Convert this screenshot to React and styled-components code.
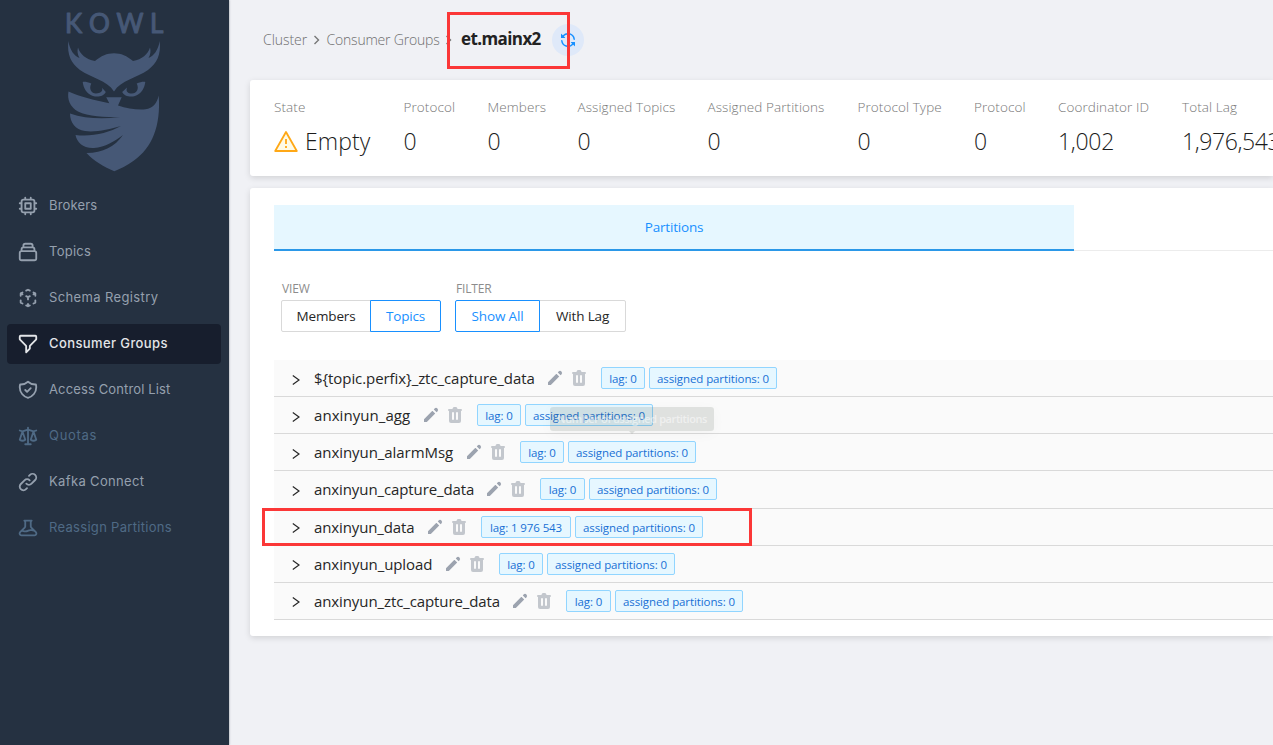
import React from "react";
import styled, { createGlobalStyle, css } from "styled-components";
import {
  HiOutlineChip,
  HiOutlineCollection,
  HiOutlineCubeTransparent,
  HiOutlineFilter,
  HiOutlineShieldCheck,
  HiOutlineScale,
  HiOutlineLink,
  HiOutlineBeaker,
  HiPencil,
  HiTrash,
} from "react-icons/hi";

const GlobalStyle = createGlobalStyle`
  *, *::before, *::after { box-sizing: border-box; }
  body {
    margin: 0;
    overflow: hidden;
    background: #f0f1f5;
    font-family: "Open Sans", "Noto Sans", sans-serif;
    font-size: 14px;
    color: #262626;
  }
`;

const Page = styled.div`
  position: relative;
  display: flex;
  width: 100%;
  height: 745px;
  overflow: hidden;
`;

const Sidebar = styled.aside`
  flex: none;
  display: flex;
  flex-direction: column;
  width: 229px;
  background: #253141;
  box-shadow: 0 0 2px rgba(37, 49, 65, 0.5);
`;

const Brand = styled.div`
  height: 180px;
`;

const Menu = styled.nav`
  display: flex;
  flex-direction: column;
  gap: 6px;
  padding: 6px 8px 0 7px;
`;

const menuTones = {
  normal: css`color: #95a0ae;`,
  active: css`color: #e3e5e8; background: #171e2d; font-weight: 500;`,
  disabled: css`color: #4f6a85;`,
};

const MenuItem = styled.a`
  display: flex;
  align-items: center;
  gap: 10px;
  height: 40px;
  padding-left: 10px;
  border-radius: 4px;
  font-family: Inter, sans-serif;
  font-size: 13px;
  white-space: nowrap;
  ${(p) => menuTones[p.$tone]}
  svg { flex: none; width: 22px; height: 22px; }
`;

const MenuLabel = styled.span`
  padding-bottom: 2px;
  letter-spacing: ${(p) => p.$tracking}px;
`;

const Main = styled.main`
  flex: 1;
  min-width: 0;
  display: flex;
  flex-direction: column;
  padding-left: 21px;
`;

const Breadcrumbs = styled.header`
  display: flex;
  align-items: center;
  height: 80px;
  padding-left: 13px;
  color: #6e6e6e;
  white-space: nowrap;
`;

const Crumb = styled.a`
  width: ${(p) => p.$width}px;
  padding-bottom: 2px;
  font-size: 14px;
  font-weight: 300;
  letter-spacing: ${(p) => p.$tracking}px;
`;

const Separator = styled.svg`
  width: 7px;
  height: 10px;
  margin: 0 6.5px 0 7px;
`;

const Title = styled.h1`
  width: 91px;
  margin: 0 0 4px 3px;
  font-size: 17px;
  font-weight: 700;
  letter-spacing: -0.6px;
  color: #222;
`;

const RefreshButton = styled.button`
  display: grid;
  place-items: center;
  width: 32px;
  height: 32px;
  padding: 0;
  border: 0;
  border-radius: 50%;
  background: #dfe9f9;
  color: #1890ff;
`;

const Card = styled.section`
  flex: none;
  background: #fff;
  border-radius: 3px 0 0 3px;
  box-shadow: 0 2px 6px rgba(0, 0, 0, 0.13);
`;

const StatsCard = styled(Card)`
  display: flex;
  height: 96px;
  margin-bottom: 12px;
  padding: 17px 0 0 24px;
  overflow: hidden;
`;

const Stat = styled.div`
  flex: none;
  width: ${(p) => p.$width}px;
  white-space: nowrap;
`;

const StatLabel = styled.div`
  height: 20px;
  line-height: 20px;
  font-size: 13.5px;
  font-weight: 300;
  letter-spacing: 0.09px;
  color: #777;
`;

const StatValue = styled.div`
  display: flex;
  align-items: center;
  gap: 7px;
  height: 38px;
  margin-top: 6px;
  font-size: 23px;
  font-weight: 350;
  letter-spacing: ${(p) => p.$tracking}px;
  color: #1c1c1c;
  span { padding-bottom: 2px; }
`;

const PanelCard = styled(Card)`
  height: 448px;
  padding: 17px 0 0 24px;
`;

const TabBar = styled.div`
  display: flex;
  height: 46px;
  box-shadow: inset 0 -1px #ececec;
`;

const Tab = styled.div`
  display: grid;
  place-items: center;
  width: 800px;
  border-bottom: 2px solid #2b98e8;
  background: #e6f7ff;
  color: #1890ff;
  font-size: 13.5px;
  letter-spacing: -0.2px;
`;

const Controls = styled.div`
  display: flex;
  gap: 14px;
  padding: 28px 0 0 7px;
`;

const ControlLabel = styled.div`
  height: 21px;
  padding-left: 1px;
  line-height: 20px;
  font-size: 12px;
  letter-spacing: -0.15px;
  color: #8c8c8c;
`;

const RadioGroup = styled.div`
  display: flex;
`;

const RadioButton = styled.button`
  position: relative;
  z-index: ${(p) => (p.$checked ? 1 : 0)};
  width: ${(p) => p.$width}px;
  height: 32px;
  padding: 0;
  border: 1px solid ${(p) => (p.$checked ? "#1890ff" : "#d9d9d9")};
  background: #fff;
  color: ${(p) => (p.$checked ? "#1890ff" : "#262626")};
  font: inherit;
  font-size: 13.5px;
  letter-spacing: -0.15px;
  white-space: nowrap;
  & + & { margin-left: -1px; }
  &:first-child { border-radius: 2px 0 0 2px; }
  &:last-child { border-radius: 0 2px 2px 0; }
`;

const TopicList = styled.div`
  display: flex;
  flex-direction: column;
  height: 260px;
  margin-top: 28px;
`;

const TopicRow = styled.div`
  flex: 1;
  display: flex;
  align-items: center;
  padding-left: 18px;
  background: #fafafa;
  border-bottom: 1px solid #d9d9d9;
  white-space: nowrap;
`;

const Chevron = styled.svg`
  flex: none;
  width: 8px;
  height: 12px;
  margin: 3px 14px 0 0;
`;

const TopicName = styled.span`
  flex: none;
  width: ${(p) => p.$width}px;
  font-size: 15px;
  letter-spacing: ${(p) => p.$tracking}px;
  color: #262626;
`;

const RowActions = styled.div`
  display: flex;
  gap: 4px;
  margin: 0 12px 0 10px;
  svg { width: 20px; height: 20px; }
`;

const PencilIcon = styled(HiPencil)`
  color: #9ca3af;
`;

const TrashIcon = styled(HiTrash)`
  color: #c3c7cd;
`;

const Tag = styled.span`
  width: ${(p) => p.$width}px;
  height: 22px;
  margin-right: 4px;
  border: 1px solid #91d5ff;
  border-radius: 2px;
  background: #e6f7ff;
  color: #1870d5;
  font-size: 11.5px;
  line-height: 21px;
  text-align: center;
  letter-spacing: -0.1px;
`;

const Tooltip = styled.div`
  position: absolute;
  left: 550px;
  top: 407px;
  width: 164px;
  height: 24px;
  border-radius: 3px;
  background: rgba(65, 75, 65, 0.14);
  box-shadow: 0 3px 14px rgba(0, 0, 0, 0.03);
  color: rgba(255, 255, 255, 0.5);
  font-size: 11px;
  font-weight: 600;
  line-height: 24px;
  text-align: center;
  letter-spacing: -0.4px;
  white-space: nowrap;
  &::after {
    content: "";
    position: absolute;
    left: 79px;
    top: 24px;
    border: 3px solid transparent;
    border-top-color: rgba(65, 75, 65, 0.14);
    border-bottom: 0;
  }
`;

const Highlight = styled.div`
  position: absolute;
  left: ${(p) => p.$x}px;
  top: ${(p) => p.$y}px;
  width: ${(p) => p.$w}px;
  height: ${(p) => p.$h}px;
  border: 3px solid #fb3737;
`;

const BrandName = styled.text`
  font-family: Lato, sans-serif;
  font-size: 26px;
  font-weight: 400;
  fill: #465876;
  stroke: #465876;
  stroke-width: 1.1px;
  stroke-linejoin: round;
`;

const OwlLogo = () => (
  <svg width="229" height="180" viewBox="0 0 229 180" fill="#465876">
    <BrandName x="65 89 116.5 150" y="33.3">KOWL</BrandName>
    <path d="M68.3 41C70 50 74 56 79.5 58C77.5 54.5 77 51 78 47.5C80 54 86 59.5 95 61C101 56 107 53.3 114 53.3C121 53.3 127 56 133 61C142 59.5 148 54 150 47.5C151 51 150.500 54.500 148.500 58C154 56 158 50 159.800 41C161 55 157 63 148 70C137 78 121 80 114 91.500C107 80 91 78 80 70C71 63 67 55 68.300 41Z" />
    <path d="M82.700 82C84.500 81.500 88 82.200 91.300 83.500C88.500 89 91.500 93.500 96 93.500C100.500 93.500 103.300 91 102 87.800L105.800 92C104 96 98 97.500 93 96C86.500 94 83.500 88 82.700 82Z" />
    <path d="M145.300 82C143.500 81.500 140 82.200 136.700 83.500C139.500 89 136.500 93.500 132 93.500C128 93.500 125.500 91.500 127 87.500L122.200 92C124 96 130 97.500 135 96C141.500 94 144.500 88 145.300 82Z" />
    <path d="M68.500 91.500C79 96.500 94 100 109.300 103.200L106.200 97.300H121.700L118 105.500C127 108.500 137 110 145.500 109.300C153 108.500 157 103 158.700 95.500C161 126 152 148 134 160.500C127 165.500 120 169 114.300 171.200C104 167 94 161 86.500 153C103 153 115 146.500 123 135C115 141 105 147.500 94 148C83 148.500 77 142.500 75.500 135C92 137 108 133 121 126C109 129.500 95 132.500 85 131C75 129.500 70 122.500 70 113.500C85 119 103 119 120 117.300C105 117 88 116.500 78 111.500C70 107 67 99 68.500 91.500Z" />
  </svg>
);

const RefreshIcon = () => (
  <svg width="16" height="16" viewBox="0 0 16 16" fill="currentColor">
    <path d="M1.705 8.005a.75.75 0 0 1 .834.656 5.5 5.5 0 0 0 9.592 2.97l-1.204-1.204a.25.25 0 0 1 .177-.427h3.646a.25.25 0 0 1 .25.25v3.646a.25.25 0 0 1-.427.177l-1.38-1.38A7.002 7.002 0 0 1 1.05 8.84a.75.75 0 0 1 .656-.834ZM8 2.5a5.487 5.487 0 0 0-4.131 1.869l1.204 1.204A.25.25 0 0 1 4.896 6H1.25A.25.25 0 0 1 1 5.75V2.104a.25.25 0 0 1 .427-.177l1.38 1.38A7.002 7.002 0 0 1 14.95 7.16a.75.75 0 0 1-1.49.178A5.5 5.5 0 0 0 8 2.5Z" />
  </svg>
);

const WarningIcon = () => (
  <svg width="24" height="24" viewBox="0 0 24 24" fill="#fffbe6" stroke="#ffa816" strokeWidth="1.8" strokeLinejoin="round">
    <path d="M12 2L22.800 21H1.200Z" />
    <path d="M12 9V14M12 16V18" fill="none" />
  </svg>
);

const CrumbSeparator = () => (
  <Separator viewBox="0 0 7 10" fill="none" stroke="#777" strokeWidth="1.4">
    <path d="M1.500 1L5.500 5L1.500 9" />
  </Separator>
);

const ExpandIcon = () => (
  <Chevron viewBox="0 0 8 12" fill="none" stroke="#262626" strokeWidth="1.200">
    <path d="M0.800 1.500L7 6L0.800 10.500" />
  </Chevron>
);

const menu = [
  { label: "Brokers", icon: HiOutlineChip, tone: "normal", tracking: 0.15 },
  { label: "Topics", icon: HiOutlineCollection, tone: "normal", tracking: 0.25 },
  { label: "Schema Registry", icon: HiOutlineCubeTransparent, tone: "normal", tracking: 0.37 },
  { label: "Consumer Groups", icon: HiOutlineFilter, tone: "active", tracking: 0.4 },
  { label: "Access Control List", icon: HiOutlineShieldCheck, tone: "normal", tracking: 0.13 },
  { label: "Quotas", icon: HiOutlineScale, tone: "disabled", tracking: 0.7 },
  { label: "Kafka Connect", icon: HiOutlineLink, tone: "normal", tracking: 0.35 },
  { label: "Reassign Partitions", icon: HiOutlineBeaker, tone: "disabled", tracking: 0.3 },
];

const stats = [
  { label: "State", value: "Empty", width: 129.5, tracking: 0.1, warning: true },
  { label: "Protocol", value: "0", width: 84, tracking: 0 },
  { label: "Members", value: "0", width: 90, tracking: 0 },
  { label: "Assigned Topics", value: "0", width: 130, tracking: 0 },
  { label: "Assigned Partitions", value: "0", width: 150, tracking: 0 },
  { label: "Protocol Type", value: "0", width: 116.5, tracking: 0 },
  { label: "Protocol", value: "0", width: 84, tracking: 0 },
  { label: "Coordinator ID", value: "1,002", width: 124, tracking: -0.3 },
  { label: "Total Lag", value: "1,976,543", width: 120, tracking: -0.4 },
];

const topics = [
  { name: "${topic.perfix}_ztc_capture_data", width: 221, tracking: -0.07, lag: "0", lagWidth: 44 },
  { name: "anxinyun_agg", width: 97, tracking: 0.06, lag: "0", lagWidth: 44 },
  { name: "anxinyun_alarmMsg", width: 140, tracking: -0.06, lag: "0", lagWidth: 44 },
  { name: "anxinyun_capture_data", width: 160, tracking: -0.1, lag: "0", lagWidth: 45 },
  { name: "anxinyun_data", width: 101, tracking: -0.12, lag: "1 976 543", lagWidth: 90 },
  { name: "anxinyun_upload", width: 119, tracking: -0.08, lag: "0", lagWidth: 44 },
  { name: "anxinyun_ztc_capture_data", width: 186, tracking: -0.1, lag: "0", lagWidth: 45 },
];

export default function App() {
  return (
    <Page>
      <GlobalStyle />
      <Sidebar>
        <Brand>
          <OwlLogo />
        </Brand>
        <Menu>
          {menu.map(({ label, icon: Icon, tone, tracking }) => (
            <MenuItem key={label} $tone={tone}>
              <Icon />
              <MenuLabel $tracking={tracking}>{label}</MenuLabel>
            </MenuItem>
          ))}
        </Menu>
      </Sidebar>
      <Main>
        <Breadcrumbs>
          <Crumb $width={43} $tracking={-0.05}>Cluster</Crumb>
          <CrumbSeparator />
          <Crumb $width={111} $tracking={-0.2}>Consumer Groups</Crumb>
          <CrumbSeparator />
          <Title>et.mainx2</Title>
          <RefreshButton aria-label="Refresh">
            <RefreshIcon />
          </RefreshButton>
        </Breadcrumbs>
        <StatsCard>
          {stats.map((s, i) => (
            <Stat key={i} $width={s.width}>
              <StatLabel>{s.label}</StatLabel>
              <StatValue $tracking={s.tracking}>
                {s.warning && <WarningIcon />}
                <span>{s.value}</span>
              </StatValue>
            </Stat>
          ))}
        </StatsCard>
        <PanelCard>
          <TabBar>
            <Tab>Partitions</Tab>
          </TabBar>
          <Controls>
            <div>
              <ControlLabel>VIEW</ControlLabel>
              <RadioGroup>
                <RadioButton $width={90}>Members</RadioButton>
                <RadioButton $width={71} $checked>Topics</RadioButton>
              </RadioGroup>
            </div>
            <div>
              <ControlLabel>FILTER</ControlLabel>
              <RadioGroup>
                <RadioButton $width={85} $checked>Show All</RadioButton>
                <RadioButton $width={87}>With Lag</RadioButton>
              </RadioGroup>
            </div>
          </Controls>
          <TopicList>
            {topics.map((t) => (
              <TopicRow key={t.name}>
                <ExpandIcon />
                <TopicName $width={t.width} $tracking={t.tracking}>{t.name}</TopicName>
                <RowActions>
                  <PencilIcon />
                  <TrashIcon />
                </RowActions>
                <Tag $width={t.lagWidth}>lag: {t.lag}</Tag>
                <Tag $width={128}>assigned partitions: 0</Tag>
              </TopicRow>
            ))}
          </TopicList>
        </PanelCard>
      </Main>
      <Tooltip>Number of assigned partitions</Tooltip>
      <Highlight $x={447} $y={12} $w={123} $h={57} />
      <Highlight $x={262} $y={508} $w={490} $h={38} />
    </Page>
  );
}
